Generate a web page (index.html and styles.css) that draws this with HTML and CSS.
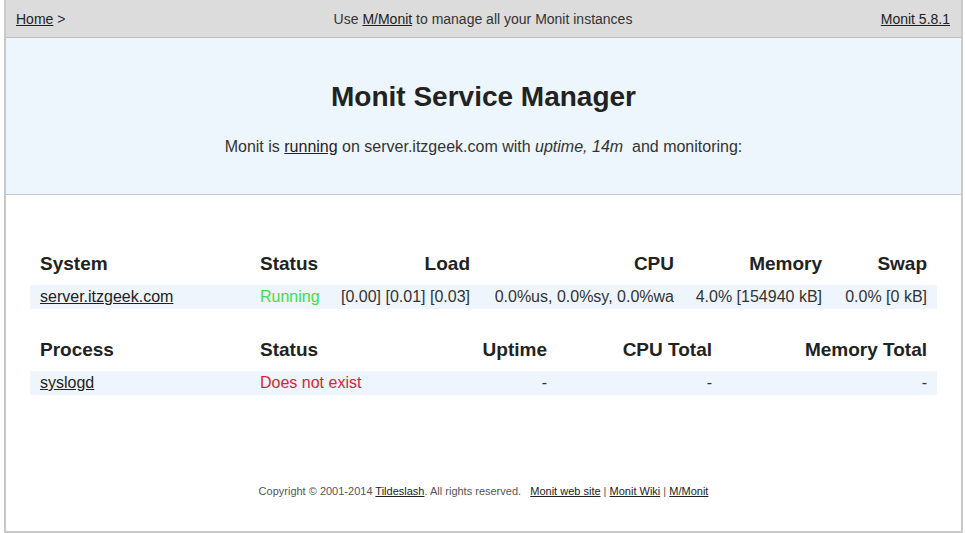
FILE: index.html
```html
<!DOCTYPE html>
<html>
<head>
<meta charset="utf-8">
<title>Monit: server.itzgeek.com</title>
<link rel="stylesheet" href="styles.css">
</head>
<body>
<div class="frame">
  <div class="nav">
    <div class="nav-left"><a href="#">Home</a> &gt;</div>
    <div class="nav-center">Use <a href="#">M/Monit</a> to manage all your Monit instances</div>
    <div class="nav-right"><a href="#">Monit 5.8.1</a></div>
  </div>
  <div class="header">
    <h1>Monit Service Manager</h1>
    <p>Monit is <a href="#">running</a> on server.itzgeek.com with <i>uptime, 14m</i>&nbsp; and monitoring:</p>
  </div>
  <div class="main">
    <table class="tbl sys">
      <colgroup><col class="c1"><col class="c2"><col class="c3"><col class="c4"><col class="c5"><col class="c6"></colgroup>
      <tr class="head"><th class="l">System</th><th class="l">Status</th><th class="r">Load</th><th class="r">CPU</th><th class="r">Memory</th><th class="r">Swap</th></tr>
      <tr class="row"><td class="l"><a href="#">server.itzgeek.com</a></td><td class="l green">Running</td><td class="r">[0.00]&nbsp;[0.01]&nbsp;[0.03]</td><td class="r">0.0%us,&nbsp;0.0%sy,&nbsp;0.0%wa</td><td class="r">4.0% [154940&nbsp;kB]</td><td class="r">0.0% [0&nbsp;kB]</td></tr>
    </table>
    <table class="tbl proc">
      <colgroup><col class="p1"><col class="p2"><col class="p3"><col class="p4"><col class="p5"></colgroup>
      <tr class="head"><th class="l">Process</th><th class="l">Status</th><th class="r">Uptime</th><th class="r">CPU Total</th><th class="r">Memory Total</th></tr>
      <tr class="row"><td class="l"><a href="#">syslogd</a></td><td class="l red">Does not exist</td><td class="r">-</td><td class="r">-</td><td class="r">-</td></tr>
    </table>
    <div class="footer">Copyright &copy; 2001-2014 <a href="#">Tildeslash</a>. All rights reserved. &nbsp; <a href="#">Monit web site</a> | <a href="#">Monit Wiki</a> | <a href="#">M/Monit</a></div>
  </div>
</div>
</body>
</html>
```
FILE: styles.css
```css
html, body {
  margin: 0;
  padding: 0;
  background: #ffffff;
}
body {
  font-family: "Liberation Sans", Arial, sans-serif;
  color: #333;
}
a {
  color: #222;
  text-decoration: underline;
}
.frame {
  margin-left: 4px;
  width: 955px;
  height: 531px;
  border-left: 2px solid #c9c9c9;
  border-right: 2px solid #c9c9c9;
  border-bottom: 2px solid #c9c9c9;
  display: flex;
  flex-direction: column;
}
.nav {
  height: 37px;
  background: #dcdcdc;
  border-bottom: 1px solid #bdbdbd;
  display: flex;
  align-items: center;
  justify-content: space-between;
  font-size: 14px;
  color: #333;
  padding: 0 11px 0 10px;
}
.nav-left, .nav-right {
  width: 150px;
}
.nav-right {
  text-align: right;
}
.nav-center {
  flex: 1;
  text-align: center;
}
.header {
  height: 157px;
  background: #eef6fd;
  border-bottom: 1px solid #c4c8cc;
  text-align: center;
  box-sizing: border-box;
  padding-top: 43px;
}
.header h1 {
  margin: 0;
  font-size: 28px;
  line-height: 32px;
  font-weight: bold;
  color: #222;
}
.header p {
  margin: 24px 0 0;
  font-size: 16px;
  line-height: 20px;
  color: #333;
}
.main {
  flex: 1;
  display: flex;
  flex-direction: column;
  padding: 58px 24px 0;
}
.tbl {
  border-collapse: collapse;
  table-layout: fixed;
  width: 907px;
}
.tbl th, .tbl td {
  padding: 0 10px;
  white-space: nowrap;
}
.tbl th {
  font-size: 19px;
  font-weight: bold;
  color: #222;
  line-height: 22px;
  padding-bottom: 10px;
}
.tbl td {
  font-size: 16px;
  line-height: 24px;
  height: 24px;
  color: #333;
}
.row {
  background: #eef5fd;
}
.l { text-align: left; }
.r { text-align: right; }
.tbl td.green { color: #44dd44; }
.tbl td.red { color: #dd2233; }
.c1 { width: 220px; }
.c2 { width: 81px; }
.c3 { width: 149px; }
.c4 { width: 204px; }
.c5 { width: 148px; }
.c6 { width: 105px; }
.p1 { width: 220px; }
.p2 { width: 150px; }
.p3 { width: 157px; }
.p4 { width: 165px; }
.p5 { width: 215px; }
.proc {
  margin-top: 30px;
}
.footer {
  margin-top: auto;
  margin-bottom: 33px;
  text-align: center;
  font-size: 11px;
  color: #555;
  line-height: 14px;
}
.footer a {
  color: #222;
}
```
